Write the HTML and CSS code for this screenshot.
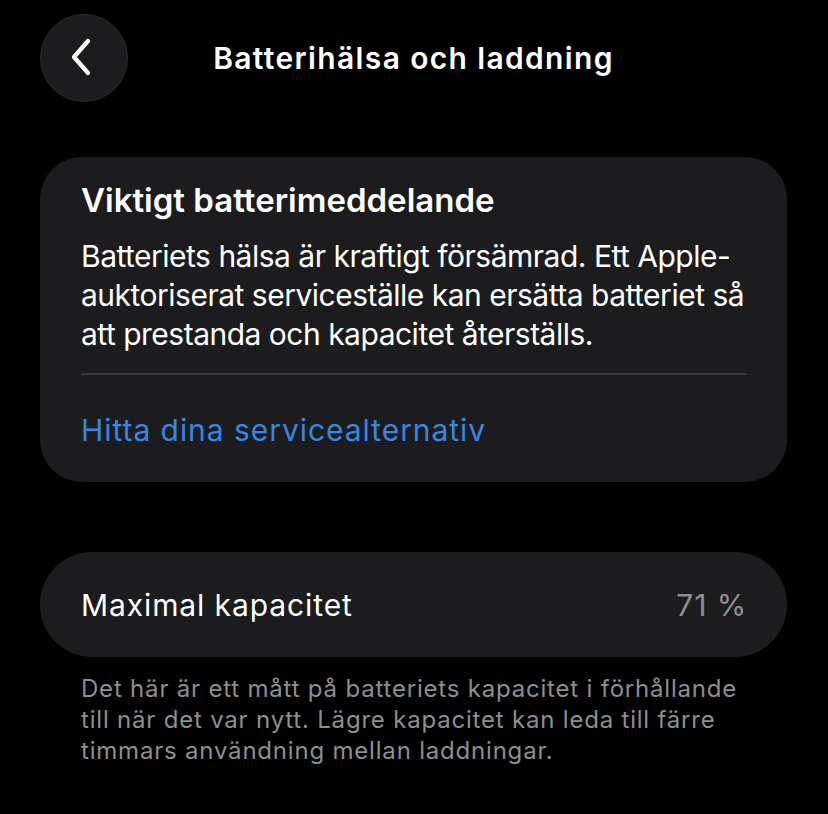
FILE: index.html
```html
<!DOCTYPE html>
<html lang="sv">

<head>
    <meta charset="UTF-8">
    <meta name="viewport" content="width=device-width, initial-scale=1.0">
    <title>Batterihälsa och laddning</title>
    <link rel="stylesheet" href="styles.css">
</head>

<body>
    <header class="nav-bar">
        <button class="back-btn" aria-label="Tillbaka">
            <svg width="30" height="40" viewBox="0 0 30 40">
                <path d="M22 3 L8 19 L22 35" fill="none" stroke="#fff" stroke-width="4.2" stroke-linecap="round" stroke-linejoin="round" />
            </svg>
        </button>
        <h1 class="nav-title">Batterihälsa och laddning</h1>
    </header>

    <section class="card notice">
        <h2>Viktigt batterimeddelande</h2>
        <p class="notice-text">Batteriets hälsa är kraftigt försämrad. Ett Apple-auktoriserat serviceställe kan ersätta batteriet så att prestanda och kapacitet återställs.</p>
        <div class="divider"></div>
        <a class="link" href="#">Hitta dina servicealternativ</a>
    </section>

    <section class="card capacity">
        <span class="label">Maximal kapacitet</span>
        <span class="value">71 %</span>
    </section>

    <p class="footnote">Det här är ett mått på batteriets kapacitet i förhållande till när det var nytt. Lägre kapacitet kan leda till färre timmars användning mellan laddningar.</p>
</body>

</html>
```

FILE: styles.css
```css
/* General Reset */
* {
    margin: 0;
    padding: 0;
    box-sizing: border-box;
    font-family: 'Inter', 'Roboto', sans-serif;
}

body {
    background: #000;
    color: #fff;
    width: 828px;
    height: 814px;
    overflow: hidden;
    padding: 14px 41px 0 40px;
}

.nav-bar {
    position: relative;
    height: 88px;
    display: flex;
    align-items: center;
    justify-content: center;
}

.back-btn {
    position: absolute;
    left: 0;
    top: 0;
    width: 88px;
    height: 88px;
    border-radius: 50%;
    background: #1c1c1e;
    border: 1px solid #2c2c2e;
    display: flex;
    align-items: center;
    justify-content: center;
    padding-right: 6px;
}

.nav-title {
    font-size: 30px;
    font-weight: 600;
    letter-spacing: 1.35px;
    line-height: 40px;
}

.card {
    background: #1c1c1e;
    border-radius: 42px;
}

.notice {
    margin-top: 55px;
    padding: 23px 34px 0 41px;
    height: 325px;
}

.notice h2 {
    font-size: 33px;
    font-weight: 600;
    letter-spacing: 0;
    line-height: 40px;
}

.notice-text {
    margin-top: 17px;
    font-size: 30px;
    line-height: 39px;
    letter-spacing: -0.5px;
    color: #fff;
}

.divider {
    height: 2px;
    background: #38383a;
    margin: 19px 6px 0 0;
}

.link {
    display: block;
    margin-top: 35px;
    font-size: 30px;
    line-height: 40px;
    color: #3a85e0;
    text-decoration: none;
    letter-spacing: 0.95px;
}

.capacity {
    margin-top: 70px;
    height: 105px;
    border-radius: 52px;
    padding: 0 40px 0 41px;
    display: flex;
    align-items: center;
    justify-content: space-between;
    font-size: 30px;
    letter-spacing: 0.9px;
}

.capacity .value {
    color: #8e8e93;
}

.footnote {
    margin-top: 16px;
    padding: 0 40px 0 41px;
    font-size: 24px;
    line-height: 31px;
    color: #8e8e93;
    letter-spacing: 0.8px;
}
```
